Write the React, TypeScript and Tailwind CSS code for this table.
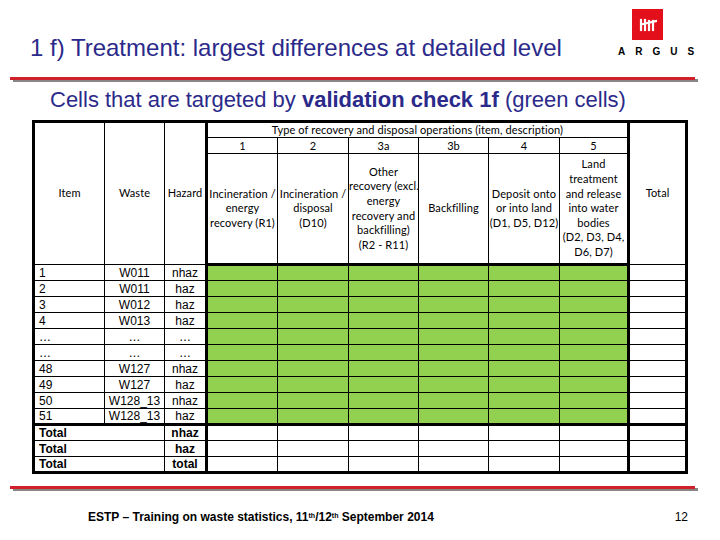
const CALI = "font-['Lato','Liberation_Sans',sans-serif]"
const SANS = "font-['Liberation_Sans',Arial,sans-serif]"

const ROWS = [
  ["1", "W011", "nhaz"],
  ["2", "W011", "haz"],
  ["3", "W012", "haz"],
  ["4", "W013", "haz"],
  ["…", "…", "…"],
  ["…", "…", "…"],
  ["48", "W127", "nhaz"],
  ["49", "W127", "haz"],
  ["50", "W128_13", "nhaz"],
  ["51", "W128_13", "haz"],
]

const TOTALS = ["nhaz", "haz", "total"]

// header descriptions, one entry per printed line
const DESCRIPTIONS = [
  ["Incineration /", "energy", "recovery (R1)"],
  ["Incineration /", "disposal", "(D10)"],
  ["Other", "recovery (excl.", "energy", "recovery and", "backfilling)", "(R2 - R11)"],
  ["Backfilling"],
  ["Deposit onto", "or into land", "(D1, D5, D12)"],
  ["Land", "treatment", "and release", "into water", "bodies", "(D2, D3, D4,", "D6, D7)"],
]

const CODES = ["1", "2", "3a", "3b", "4", "5"]
const OP_KEYS = ["op-1", "op-2", "op-3a", "op-3b", "op-4", "op-5"]

function RedRule() {
  return (
    <div className="relative h-[6px] w-[688px]">
      <div className="absolute top-[2px] left-[3px] h-[3px] w-[685px] bg-[#8a8585]" />
      <div className="absolute top-0 left-0 h-[3px] w-[685px] bg-[#d0202a]" />
    </div>
  )
}

function ArgusLogo() {
  return (
    <div className="flex w-[85px] flex-col items-start">
      <div className="ml-[14px] flex h-[31px] w-[31px] items-center justify-center bg-[#e3101b]">
        <svg width="18" height="14" viewBox="0 0 18 14">
          <g stroke="white" strokeWidth="2.2" fill="none" strokeLinecap="square">
            <path d="M2 2 L2 12" />
            <path d="M6 2 L6 12" />
            <path d="M10 3 L10 12" />
            <path d="M14 3 L14 12" />
            <path d="M4 6 L17 3" />
          </g>
        </svg>
      </div>
      <div className={`${SANS} mt-[7px] text-[10px] leading-none font-bold tracking-[10px] text-black`}>
        ARGUS
      </div>
    </div>
  )
}

export default function App() {
  return (
    <div className="h-[540px] w-[720px] overflow-hidden bg-white">
      {/* title bar */}
      <div className="flex h-[77px] items-start justify-between">
        <h1 className={`${SANS} pt-[34px] pl-[30px] text-[24px] leading-[28px] text-[#2b2a8a]`}>
          1 f) Treatment: largest differences at detailed level
        </h1>
        <div className="pt-[9px] pr-[17px]">
          <ArgusLogo />
        </div>
      </div>

      <div className="pl-[10px]">
        <RedRule />
      </div>

      <p className={`${SANS} pt-[4px] pl-[50px] text-[22px] leading-[26px] text-[#2b2a8a]`}>
        Cells that are targeted by <b>validation check 1f</b> (green cells)
      </p>

      {/* table */}
      <div className="pt-[7px] pl-[32px]">
        <table className="w-[653px] table-fixed border-collapse border-[3px] border-black text-black">
          <colgroup>
            <col className="w-[71px]" />
            <col className="w-[60px]" />
            <col className="w-[42px]" />
            <col className="w-[71px]" />
            <col className="w-[71px]" />
            <col className="w-[70px]" />
            <col className="w-[70px]" />
            <col className="w-[71px]" />
            <col className="w-[69px]" />
            <col className="w-[58px]" />
          </colgroup>
          <thead className={`${CALI} text-[11px] tracking-[0.1px]`}>
            <tr className="h-[15px]">
              <th rowSpan={3} className="border border-black p-0 font-normal">
                Item
              </th>
              <th rowSpan={3} className="border border-black p-0 font-normal">
                Waste
              </th>
              <th rowSpan={3} className="border border-r-[3px] border-black p-0 font-normal">
                Hazard
              </th>
              <th
                colSpan={6}
                className="border border-black p-0 text-center leading-[14px] font-normal whitespace-nowrap">
                Type of recovery and disposal operations (item, description)
              </th>
              <th rowSpan={3} className="border border-l-[3px] border-black p-0 font-normal">
                Total
              </th>
            </tr>
            <tr className="h-[16px]">
              {CODES.map((c, i) => (
                <th key={OP_KEYS[i]} className="border border-black p-0 leading-[14px] font-normal">
                  {c}
                </th>
              ))}
            </tr>
            <tr className="h-[111px]">
              {DESCRIPTIONS.map((lines, i) => (
                <th
                  key={OP_KEYS[i]}
                  className="border border-b-[3px] border-black p-0 text-center leading-[14.6px] font-normal whitespace-nowrap">
                  {lines.map((l, j) => (
                    <div key={`${OP_KEYS[i]}-${j}`}>{l}</div>
                  ))}
                </th>
              ))}
            </tr>
          </thead>
          <tbody className={`${SANS} text-[12px] leading-[14px]`}>
            {ROWS.map((r, i) => {
              const last = i === ROWS.length - 1 ? "border-b-[3px]" : ""
              return (
                <tr key={`row-${r[0]}-${i}`} className="h-[16px]">
                  <td className={`border border-black p-0 pl-[4px] ${last}`}>{r[0]}</td>
                  <td className={`border border-black p-0 text-center ${last}`}>{r[1]}</td>
                  <td className={`border border-r-[3px] border-black p-0 text-center ${last}`}>
                    {r[2]}
                  </td>
                  {OP_KEYS.map((k) => (
                    <td key={k} className={`border border-black bg-[#92d050] p-0 ${last}`} />
                  ))}
                  <td className={`border border-l-[3px] border-black p-0 ${last}`} />
                </tr>
              )
            })}
            {TOTALS.map((t) => (
              <tr key={`total-${t}`} className="h-[16px] font-bold">
                <td colSpan={2} className="border border-black p-0 pl-[4px]">
                  Total
                </td>
                <td className="border border-r-[3px] border-black p-0 text-center">{t}</td>
                {OP_KEYS.map((k) => (
                  <td key={k} className="border border-black p-0" />
                ))}
                <td className="border border-l-[3px] border-black p-0" />
              </tr>
            ))}
          </tbody>
        </table>
      </div>

      <div className="pt-[12px] pl-[10px]">
        <RedRule />
      </div>

      {/* footer */}
      <div
        className={`${SANS} flex items-center justify-between pt-[17px] pr-[32px] pl-[88px] text-[12px] leading-[16px] text-black`}>
        <span className="font-bold">
          ESTP – Training on waste statistics, 11<sup className="text-[7px]">th</sup>/12
          <sup className="text-[7px]">th</sup> September 2014
        </span>
        <span>12</span>
      </div>
    </div>
  )
}
